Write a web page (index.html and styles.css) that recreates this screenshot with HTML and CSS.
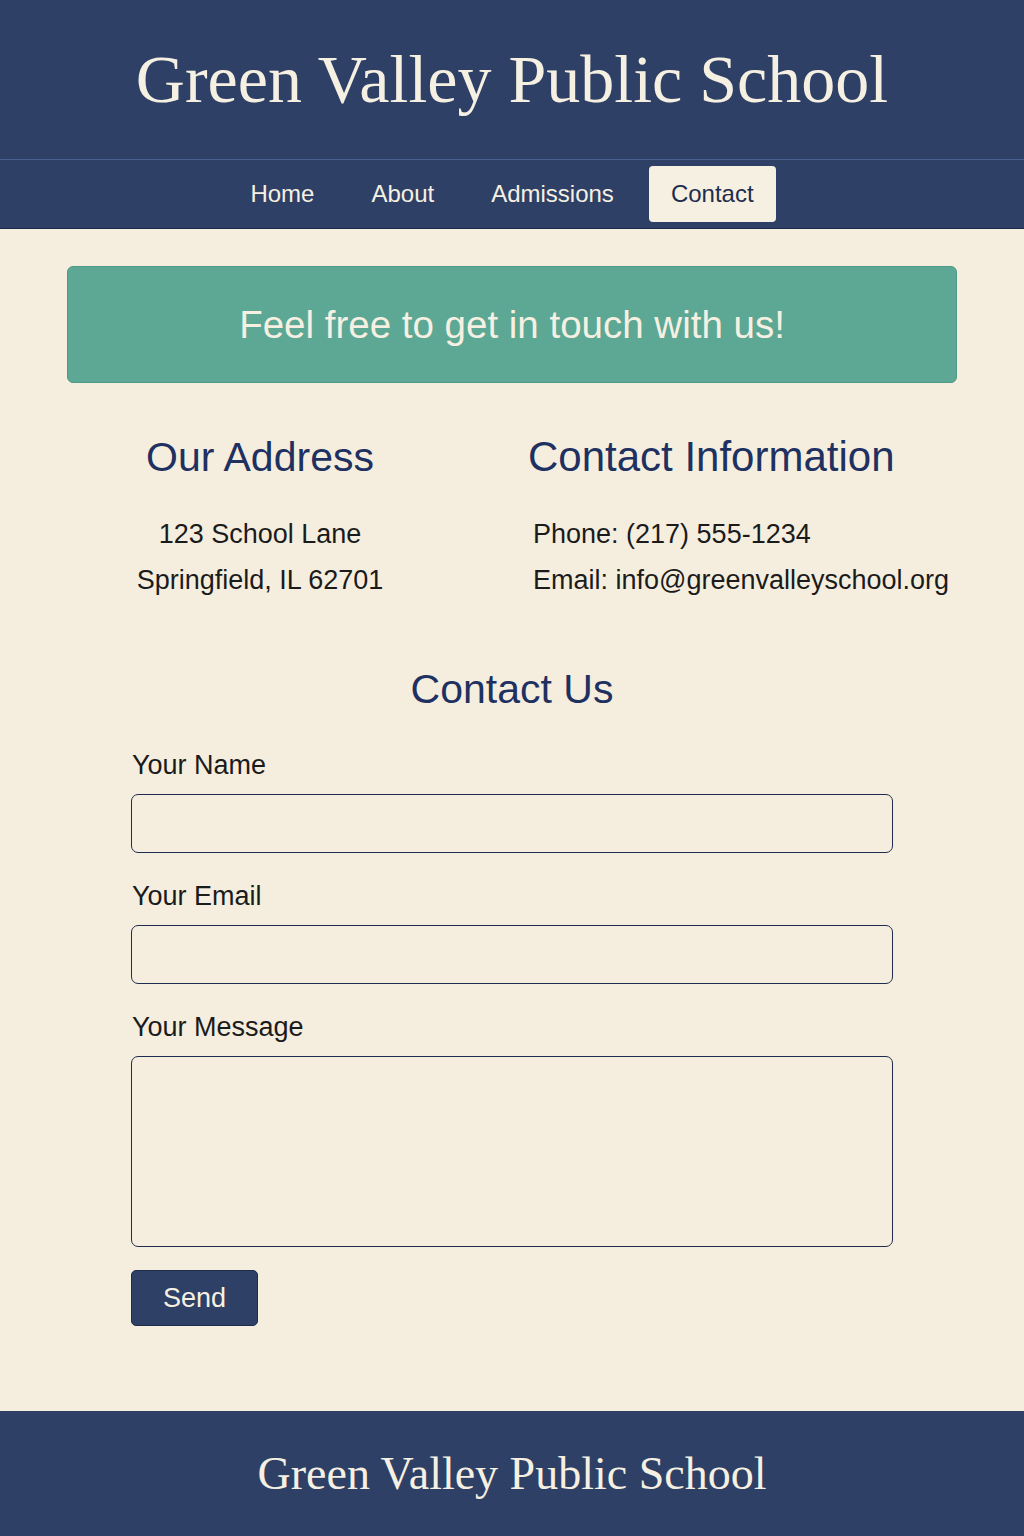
FILE: index.html
```html
<!DOCTYPE html>
<html lang="en">
<head>
<meta charset="utf-8">
<title>Contact - Green Valley Public School</title>
<link rel="stylesheet" href="styles.css">
</head>
<body>
<header class="site-header">
  <h1 class="site-title">Green Valley Public School</h1>
</header>
<nav class="site-nav">
  <a class="nav-link" href="#">Home</a>
  <a class="nav-link" href="#">About</a>
  <a class="nav-link" href="#">Admissions</a>
  <a class="nav-link active" href="#">Contact</a>
</nav>
<main class="main">
  <div class="banner">Feel free to get in touch with us!</div>
  <section class="info">
    <div class="info-col address">
      <h2 class="info-heading">Our Address</h2>
      <p class="info-line">123 School Lane</p>
      <p class="info-line">Springfield, IL 62701</p>
    </div>
    <div class="info-col contact">
      <h2 class="info-heading">Contact Information</h2>
      <p class="info-line">Phone: (217) 555-1234</p>
      <p class="info-line">Email: info@greenvalleyschool.org</p>
    </div>
  </section>
  <section class="form-section">
    <h2 class="form-heading">Contact Us</h2>
    <form class="contact-form">
      <label class="field-label" for="name">Your Name</label>
      <input class="field-input" id="name" type="text">
      <label class="field-label" for="email">Your Email</label>
      <input class="field-input" id="email" type="email">
      <label class="field-label" for="message">Your Message</label>
      <textarea class="field-input field-area" id="message"></textarea>
      <button class="send-btn" type="button">Send</button>
    </form>
  </section>
</main>
<footer class="site-footer">
  <p class="footer-title">Green Valley Public School</p>
</footer>
</body>
</html>
```

FILE: styles.css
```css
* { box-sizing: border-box; }
body {
  margin: 0;
  background: #f5eedf;
  font-family: "Liberation Sans", Arial, sans-serif;
  color: #1b1b1b;
}
.site-header {
  background: #2e4066;
  height: 160px;
  border-bottom: 1px solid #4a6190;
  display: flex;
  align-items: center;
  justify-content: center;
}
.site-title {
  margin: 0;
  font-family: "Liberation Serif", "Times New Roman", serif;
  font-weight: normal;
  font-size: 68px;
  color: #f6f0e2;
  letter-spacing: 0;
}
.site-nav {
  background: #2e4066;
  height: 69px;
  border-bottom: 1px solid #1c2a4a;
  display: flex;
  justify-content: center;
  align-items: center;
  gap: 13px;
  padding-right: 20px;
}
.nav-link {
  display: flex;
  align-items: center;
  height: 56px;
  padding: 0 22px;
  color: #f6f0e2;
  text-decoration: none;
  font-size: 24px;
  border-radius: 4px;
}
.nav-link.active {
  background: #f6f0e2;
  color: #1e2d4e;
}
.main {
  padding-top: 37px;
}
.banner {
  width: 890px;
  margin: 0 auto;
  height: 117px;
  background: #5ca894;
  border: 1px solid #4f9a86;
  border-radius: 6px;
  color: #f6f0e2;
  font-size: 38.5px;
  display: flex;
  align-items: center;
  justify-content: center;
}
.info {
  display: grid;
  grid-template-columns: 320px 430px;
  column-gap: 108px;
  margin: 50px 0 0 100px;
}
.info-heading {
  margin: 0 0 30px;
  font-weight: normal;
  font-size: 41px;
  line-height: 48px;
  color: #1e3160;
}
.contact .info-heading { font-size: 42px; }
.info-line {
  margin: 0;
  font-size: 27px;
  line-height: 46px;
}
.address { text-align: center; }
.contact .info-line { padding-left: 5px; }
.form-section {
  width: 762px;
  margin: 62px auto 0;
}
.form-heading {
  margin: 0 0 37px;
  text-align: center;
  font-weight: normal;
  font-size: 41px;
  line-height: 48px;
  color: #1e3160;
}
.contact-form {
  display: flex;
  flex-direction: column;
  align-items: flex-start;
}
.field-label {
  font-size: 27px;
  line-height: 30px;
  margin: 0 0 14px 1px;
}
.field-input {
  width: 100%;
  height: 59px;
  margin: 0 0 28px;
  background: #f5eedf;
  border: 1px solid #1e2d4e;
  border-radius: 7px;
  font: inherit;
}
.field-area {
  height: 191px;
  margin-bottom: 23px;
  resize: none;
}
.send-btn {
  width: 127px;
  height: 56px;
  background: #2e4066;
  color: #f6f0e2;
  border: 1px solid #1e2d4e;
  border-radius: 5px;
  font-family: inherit;
  font-size: 27px;
}
.site-footer {
  margin-top: 85px;
  height: 125px;
  background: #2e4066;
  display: flex;
  align-items: center;
  justify-content: center;
}
.footer-title {
  margin: 0;
  font-family: "Liberation Serif", "Times New Roman", serif;
  font-size: 46px;
  color: #f6f0e2;
}
```
